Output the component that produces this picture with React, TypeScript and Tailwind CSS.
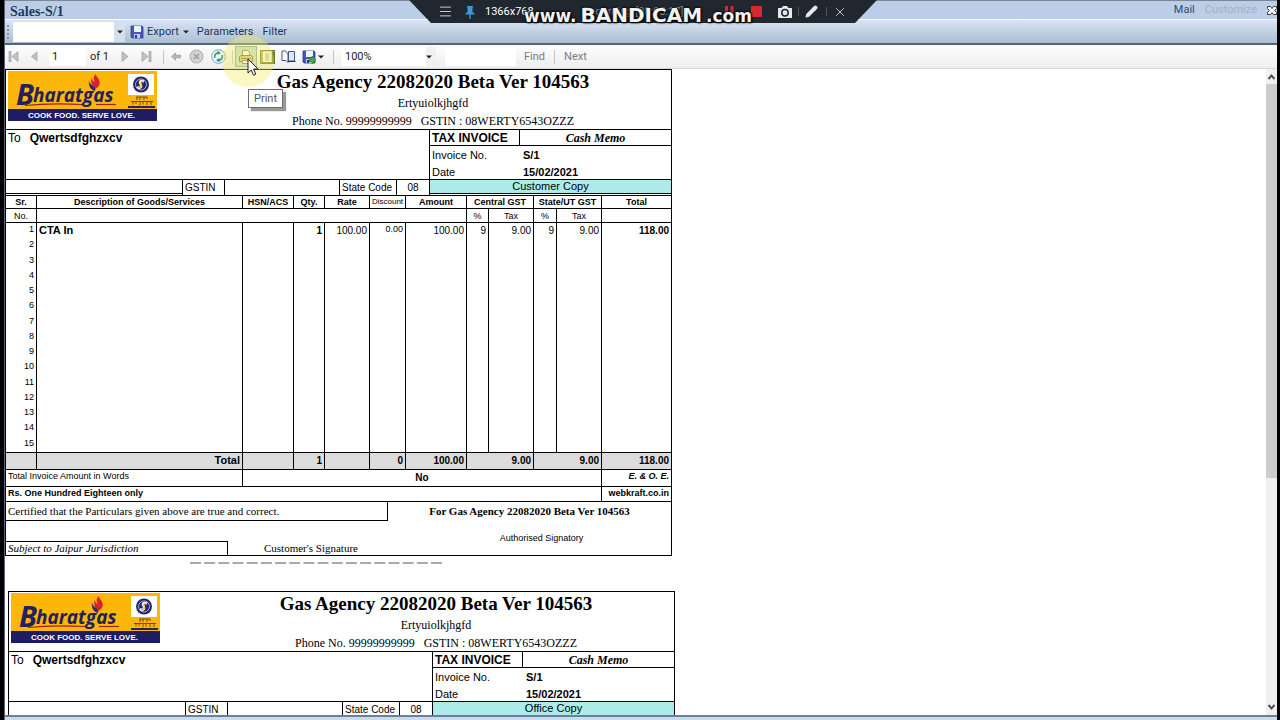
// App.tsx
import React from 'react';
import { Camera, Menu, Pencil, X } from 'lucide-react';

const AGENCY = 'Gas Agency 22082020 Beta Ver 104563';
const ROWS = Array.from({ length: 15 }, (_, i) => i + 1);
const item = { name: 'CTA In', qty: '1', rate: '100.00', discount: '0.00', amount: '100.00', pct: '9', tax: '9.00', total: '118.00' };

function Separator() {
  return <span className="h-[14px] w-px shrink-0 bg-[#c4c4c8]" />;
}

function Caret() {
  return (
    <svg width="6" height="4" viewBox="0 0 6 4" className="shrink-0" aria-hidden="true">
      <path d="M0 0.5h6L3 3.5z" fill="#222" />
    </svg>
  );
}

function FloppyIcon({ arrow = false }: { arrow?: boolean }) {
  return (
    <svg width="14" height="14" viewBox="0 0 14 14" className="shrink-0" aria-hidden="true">
      <path d="M1 1h11l1 1v11H2l-1-1z" fill="#4a55b8" stroke="#2f3a92" strokeWidth="0.8" />
      <rect x="4" y="1" width="7" height="6" fill="#f0f2ff" />
      <rect x="4" y="9" width="6" height="4" fill="#c8ccee" />
      <rect x="5" y="10" width="2" height="3" fill="#2a2f80" />
      {arrow && <path d="M7 8h3V6l4 4-4 4v-2.300H7z" fill="#3fae3a" stroke="#1f7a22" strokeWidth="0.6" />}
    </svg>
  );
}

function Logo() {
  return (
    <svg width="149" height="50" viewBox="0 0 149 50" role="img" aria-label="Bharatgas" className="shrink-0">
      <rect width="149" height="50" fill="#fdb60a" />
      <rect y="38" width="149" height="12" fill="#1e1c63" />
      <g fill="#23205f" fontFamily="Open Sans, sans-serif" fontWeight="bold" fontStyle="italic">
        <text x="8" y="34" fontSize="29">B</text>
        <text x="25" y="31" fontSize="19">haratgas</text>
      </g>
      <path d="M17 34.500C35 32.500 56 32.500 74 33.500" fill="none" stroke="#9c1f22" strokeWidth="1.200" />
      <path d="M88 33.500h20" stroke="#9c1f22" strokeWidth="1.200" />
      <path d="M87 18c4-2 6-5 4-9-1-3-3-3-3-6-3 3-3 5-1 8-3-1-3-3-3-5-2 5 0 9 3 12z" fill="#d8232a" />
      <path d="M81 9c0 3 2 4 4 6s3 3 2 5c-4-1-7-5-6-11z" fill="#2a2a78" />
      <rect x="120" y="3" width="26" height="21" fill="#fff" />
      <circle cx="133" cy="13.500" r="8" fill="#24266c" />
      <circle cx="133" cy="13.500" r="5.500" fill="none" stroke="#b9c0de" strokeWidth="0.9" />
      <path d="M136 10.500c-3-1.500-5 0-3.500 2.500s0 5-3.500 3" fill="none" stroke="#fff" strokeWidth="2.400" />
      <path d="M136 11c-3-1-4 0-3 2.200s0 4-3 3" fill="none" stroke="#fdb60a" strokeWidth="1.200" />
      <path d="M128 26h11M129 26v3M132 26v3M136 26v3M139 26v2M123 30.500h22M125 30v3.500M128 30v3M131 31c2 0 2 3 0 3M135 30v3.500M139 31v3M143 30v4" fill="none" stroke="#5b3d20" strokeWidth="0.9" />
      <rect x="120" y="35" width="27" height="2" fill="#24266c" />
      <text x="20" y="47" fontSize="8" fontWeight="bold" fill="#fff" fontFamily="Liberation Sans, sans-serif">COOK FOOD. SERVE LOVE.</text>
    </svg>
  );
}

function ItemTable() {
  return (
    <table className="h-[306px] w-full table-fixed border-separate border-spacing-0 text-[10px] leading-[13px] [&_td]:p-0 [&_td]:px-[2px] [&_th]:p-0 [&_td]:border-black [&_th]:border-black">
      <colgroup>
        <col className="w-[30px]" />
        <col className="w-[206px]" />
        <col className="w-[51px]" />
        <col className="w-[31px]" />
        <col className="w-[45px]" />
        <col className="w-[36px]" />
        <col className="w-[61px]" />
        <col className="w-[22px]" />
        <col className="w-[45px]" />
        <col className="w-[23px]" />
        <col className="w-[45px]" />
        <col className="w-[70px]" />
      </colgroup>
      <thead className="text-[9px] leading-[12px]">
        <tr className="h-[13px] [&>th]:border-t [&>th+th]:border-l">
          <th>Sr.</th>
          <th>Description of Goods/Services</th>
          <th>HSN/ACS</th>
          <th>Qty.</th>
          <th>Rate</th>
          <th className="align-top text-[8px] leading-[11px] font-normal">Discount</th>
          <th>Amount</th>
          <th colSpan={2}>Central GST</th>
          <th colSpan={2}>State/UT GST</th>
          <th>Total</th>
        </tr>
        <tr className="h-[14px] [&>th]:border-t [&>th]:font-normal [&>th+th]:border-l">
          <th>No.</th>
          <th colSpan={6} />
          <th>%</th>
          <th>Tax</th>
          <th>%</th>
          <th>Tax</th>
          <th />
        </tr>
      </thead>
      <tbody className="text-right">
        {ROWS.map((n) => (
          <tr key={n} className={n === 1 ? '[&>td]:border-t [&>td+td]:border-l' : '[&>td+td]:border-l'}>
            <td className="align-top text-[9px]">{n}</td>
            <td className="text-left text-[11px] font-bold">{n === 1 && item.name}</td>
            <td />
            <td className="font-bold">{n === 1 && item.qty}</td>
            <td>{n === 1 && item.rate}</td>
            <td className="align-top text-[9px]">{n === 1 && item.discount}</td>
            <td>{n === 1 && item.amount}</td>
            <td>{n === 1 && item.pct}</td>
            <td>{n === 1 && item.tax}</td>
            <td>{n === 1 && item.pct}</td>
            <td>{n === 1 && item.tax}</td>
            <td className="font-bold">{n === 1 && item.total}</td>
          </tr>
        ))}
      </tbody>
      <tfoot className="[&_td]:align-top">
        <tr className="h-[17px] bg-[#dcdcdc] text-right leading-[15px] font-bold [&>td]:border-t [&>td+td]:border-l">
          <td />
          <td className="text-[11px]">Total</td>
          <td />
          <td>1</td>
          <td />
          <td>0</td>
          <td>100.00</td>
          <td colSpan={2}>9.00</td>
          <td colSpan={2}>9.00</td>
          <td>118.00</td>
        </tr>
        <tr className="h-[17px] text-[9px] leading-[13px] [&>td]:border-t [&>td+td]:border-l">
          <td colSpan={2}>Total Invoice Amount in Words</td>
          <td colSpan={9} className="text-center text-[10px] leading-[15px] font-bold">No</td>
          <td className="text-right font-bold italic">E. &amp; O. E.</td>
        </tr>
        <tr className="h-[15px] text-[9px] leading-[13px] font-bold [&>td]:border-t [&>td+td]:border-l">
          <td colSpan={11}>Rs. One Hundred Eighteen only</td>
          <td className="text-right">webkraft.co.in</td>
        </tr>
      </tfoot>
    </table>
  );
}

function Invoice({ copy }: { copy: string }) {
  return (
    <section className="w-[667px] shrink-0 border border-black bg-white font-['Liberation_Sans',Arial,sans-serif] text-black">
      <header className="flex h-[59px] pt-px pl-[2px]">
        <Logo />
        <div className="flex flex-1 flex-col items-center pl-[38px] font-['Liberation_Serif','Times_New_Roman',serif] text-[12px] leading-[18px]">
          <h2 className="pb-px text-[19px] leading-[22px] font-bold">{AGENCY}</h2>
          <p>Ertyuiolkjhgfd</p>
          <p className="whitespace-pre">Phone No. 99999999999   GSTIN : 08WERTY6543OZZZ</p>
        </div>
      </header>

      <div className="flex h-[66px] border-t border-black">
        <div className="flex w-[423px] flex-col justify-between">
          <p className="flex gap-[9px] px-[2px] pt-px text-[12px] leading-[15px]">
            <span>To</span>
            <b>Qwertsdfghzxcv</b>
          </p>
          <div className="flex h-[16px] border-t border-black text-[10px] leading-[16px]">
            <span className="mb-px w-[176px] border-b border-black" />
            <span className="w-[42px] border-l border-black pl-[2px]">GSTIN</span>
            <span className="w-[115px] border-l border-black" />
            <span className="w-[57px] border-l border-black pl-[2px]">State Code</span>
            <span className="flex-1 border-l border-black text-center">08</span>
          </div>
        </div>
        <div className="flex flex-1 flex-col border-l border-black">
          <div className="flex h-[16px] shrink-0 border-b border-black text-[12px] leading-[16px] font-bold">
            <span className="w-[89px] pl-[2px]">TAX INVOICE</span>
            <span className="flex-1 border-l border-black text-center font-['Liberation_Serif','Times_New_Roman',serif] italic">Cash Memo</span>
          </div>
          <dl className="grid min-h-0 flex-1 grid-cols-[91px_1fr] pt-px pl-[2px] text-[11px] leading-[17px]">
            <dt>Invoice No.</dt>
            <dd className="font-bold">S/1</dd>
            <dt>Date</dt>
            <dd className="font-bold">15/02/2021</dd>
          </dl>
          <p className="mb-px h-[15px] shrink-0 border-y border-black bg-[#adebeb] text-center text-[11px] leading-[13px]">{copy}</p>
        </div>
      </div>

      <ItemTable />

      <footer className="flex h-[54px] border-t border-black font-['Liberation_Serif','Times_New_Roman',serif] text-[11px]">
        <div className="flex w-[382px] flex-col justify-between">
          <p className="h-[19px] border-r border-b border-black pl-[2px] leading-[18px]">Certified that the Particulars given above are true and correct.</p>
          <div className="flex h-[14px] leading-[13px]">
            <span className="w-[222px] border-t border-r border-black pl-[2px] italic">Subject to Jaipur Jurisdiction</span>
            <span className="pt-px pl-9">Customer's Signature</span>
          </div>
        </div>
        <div className="flex flex-1 flex-col items-center gap-[11px]">
          <b className="leading-[18px]">For {AGENCY}</b>
          <span className="pl-6 font-['Liberation_Sans',Arial,sans-serif] text-[9px] leading-[14px]">Authorised Signatory</span>
        </div>
      </footer>
    </section>
  );
}

function RecorderBar() {
  return (
    <div className="absolute top-0 left-[405px] h-[23px] w-[468px] bg-[#20272e] text-white [clip-path:polygon(0_0,100%_0,446px_100%,22px_100%)]">
      <div className="flex h-full items-center pl-[29px]">
        <button aria-label="Menu"><Menu size={15} strokeWidth={1.500} className="text-[#d5d8da]" /></button>
        <button aria-label="Pin" className="ml-[11px]">
          <svg width="12" height="14" viewBox="0 0 12 14" aria-hidden="true">
            <path d="M3 1h6v1.500H8.500V7L10.500 8.500V9.500H6.700V14H5.300V9.500H1.500V8.500L3.500 7V2.500H3z" fill="#3f97dc" />
          </svg>
        </button>
        <span className="ml-[9px] w-[46px] font-['Roboto',sans-serif] text-[11px] leading-[14px]">1366x768</span>
        <span className="ml-[52px] w-[120px] font-['Roboto',sans-serif] text-[11px] leading-[14px] text-[#8a8f94]">Recording [00:05:17]</span>
        <button aria-label="Pause" className="ml-[22px]">
          <svg width="9" height="11" viewBox="0 0 9 11" aria-hidden="true">
            <path d="M0 0h3v11H0zM5.500 0h3v11h-3z" fill="#d42a2e" />
          </svg>
        </button>
        <button aria-label="Stop" className="ml-[17px] h-[11px] w-[11px] bg-[#d42a2e]" />
        <button aria-label="Capture" className="ml-[15px]">
          <svg width="16" height="14" viewBox="0 0 16 14" aria-hidden="true">
            <path d="M1 3h3.500L6 1h4l1.500 2H15v10H1z" fill="#e6e8ea" />
            <circle cx="8" cy="7.800" r="3.200" fill="none" stroke="#20272e" strokeWidth="1.500" />
          </svg>
        </button>
        <span className="ml-[5px] h-[9px] w-px bg-[#4a5158]" />
        <button aria-label="Draw" className="ml-[6px]"><Pencil size={13} strokeWidth={2} className="fill-[#e6e8ea] text-[#e6e8ea]" /></button>
        <span className="ml-[8px] h-[9px] w-px bg-[#4a5158]" />
        <button aria-label="Close recorder" className="ml-[6px]"><X size={14} strokeWidth={1.500} className="text-[#d5d8da]" /></button>
      </div>
    </div>
  );
}

function TitleBar() {
  return (
    <div className="flex h-[20px] shrink-0 items-center border-t border-b border-t-[#7d8794] border-b-white bg-[#bccde8] pl-[5px] font-['Roboto',sans-serif] text-[11px] text-[#34496b]">
      <h1 className="flex-1 pt-[3px] font-['Liberation_Serif',serif] text-[14px] leading-[15px] font-bold text-[#1f3a60]">Sales-S/1</h1>
      <button className="leading-[16px]">Mail</button>
      <button className="ml-[10px] leading-[16px] text-[#a3b1c4]" disabled>Customize</button>
      <button aria-label="Close" className="ml-[10px]">
        <svg width="10" height="9" viewBox="0 0 10 9" aria-hidden="true">
          <path d="M0.500 0.500h3L5 2.500 6.500 0.500h3v2L7.500 4.500l2 2v2h-3L5 6.500 3.500 8.500h-3v-2l2-2-2-2z" fill="#fff" stroke="#333b48" />
        </svg>
      </button>
    </div>
  );
}

function ActionBar() {
  return (
    <div className="flex h-[25px] shrink-0 items-center border-b-2 border-[#50647a] bg-linear-to-b from-[#dae4f1] to-[#aabfd2] pl-[2px] font-['Roboto',sans-serif] text-[11px] leading-[16px] text-[#1f3557]">
      <span className="h-[14px] w-[3px] border-l-2 border-dotted border-[#7f93ac]" />
      <div className="relative ml-[3px] flex h-[20px] w-[112px] items-center justify-end bg-linear-to-r from-white from-90% to-[#d3e0ee] to-90% pr-[2px]">
        <select aria-label="Template" className="absolute inset-0 appearance-none opacity-0" />
        <Caret />
      </div>
      <button className="ml-[5px] flex items-center gap-[3px]">
        <FloppyIcon />
        Export
      </button>
      <span className="ml-[4px] flex"><Caret /></span>
      <button className="ml-[8px]">Parameters</button>
      <button className="ml-[9px]">Filter</button>
    </div>
  );
}

function ReportBar() {
  return (
    <div className="flex h-[24px] shrink-0 items-center border-b border-[#d8d8d8] bg-linear-to-b from-[#fdfdfd] to-[#eeeeee] pl-[3px] font-['Roboto',sans-serif] text-[11px] leading-[16px] text-[#222]">
      <button aria-label="First page">
        <svg width="11" height="11" viewBox="0 0 11 11" aria-hidden="true"><path d="M1 0h2v11H1zM10 0.500v10L4 5.500z" fill="#c0c0c4" stroke="#98989c" strokeWidth="0.6" /></svg>
      </button>
      <button aria-label="Previous page" className="ml-[11px]">
        <svg width="8" height="11" viewBox="0 0 8 11" aria-hidden="true"><path d="M7 1v9L1.500 5.500z" fill="#c0c0c4" stroke="#98989c" strokeWidth="0.6" /></svg>
      </button>
      <input aria-label="Page" defaultValue="1" className="ml-[11px] h-[19px] w-[37px] bg-white pl-[3px]" />
      <span className="ml-[4px] w-[23px] whitespace-nowrap">of 1</span>
      <button aria-label="Next page" className="ml-[8px]">
        <svg width="8" height="11" viewBox="0 0 8 11" aria-hidden="true"><path d="M1 0.500v10l6-5z" fill="#c0c0c4" stroke="#98989c" strokeWidth="0.6" /></svg>
      </button>
      <button aria-label="Last page" className="mr-[11px] ml-[12px]">
        <svg width="11" height="11" viewBox="0 0 11 11" aria-hidden="true"><path d="M8 0h2v11H8zM1 0.500v10l6-5z" fill="#c0c0c4" stroke="#98989c" strokeWidth="0.6" /></svg>
      </button>
      <Separator />
      <button aria-label="Back" className="ml-[7px]">
        <svg width="10" height="9" viewBox="0 0 10 9" aria-hidden="true"><path d="M0.500 4.500L4.500 1v2.200h5v2.600h-5V8z" fill="#b9b9bc" stroke="#909094" strokeWidth="0.7" /></svg>
      </button>
      <button aria-label="Stop rendering" className="ml-[8px]">
        <svg width="15" height="15" viewBox="0 0 15 15" aria-hidden="true">
          <circle cx="7.500" cy="7.500" r="6.500" fill="#d2d2d4" stroke="#acacb0" />
          <path d="M5 5l5 5M10 5l-5 5" stroke="#98989c" strokeWidth="1.300" />
        </svg>
      </button>
      <button aria-label="Refresh" className="mr-[6px] ml-[7px]">
        <svg width="15" height="15" viewBox="0 0 15 15" aria-hidden="true">
          <circle cx="7.500" cy="7.500" r="6.800" fill="#eef6fc" stroke="#6fa6d6" />
          <path d="M3.800 9A4 4 0 0 1 7 3.800" fill="none" stroke="#35a344" strokeWidth="1.600" />
          <path d="M6.500 1.800L10 4 6.500 6z" fill="#35a344" />
          <path d="M11.200 6A4 4 0 0 1 8 11.200" fill="none" stroke="#2f86a8" strokeWidth="1.600" />
          <path d="M8.500 9L5 11.200 8.500 13.200z" fill="#2f86a8" />
        </svg>
      </button>
      <Separator />
      <button aria-label="Print" className="ml-[2px] flex h-[21px] w-[22px] items-center justify-center border border-[#7fa99a] bg-[#c4dccb]">
        <svg width="16" height="16" viewBox="0 0 16 16" aria-hidden="true">
          <path d="M4.500 7V1.500h5l2 2V7" fill="#fff" stroke="#8c8140" />
          <path d="M1.500 7.500l1.500-1h10l1.500 1v5h-13z" fill="#d6c988" stroke="#7d7134" />
          <path d="M3 9.500h10" stroke="#7d7134" />
          <path d="M4.500 11.500h7v3h-7z" fill="#fff" stroke="#8c8140" />
        </svg>
      </button>
      <button aria-label="Print layout" className="ml-[3px]">
        <svg width="15" height="14" viewBox="0 0 15 14" aria-hidden="true">
          <rect x="0.500" y="0.500" width="14" height="13" fill="#a3b256" stroke="#66782c" />
          <path d="M13 2v11.500M2 13h12" stroke="#5a6c24" strokeWidth="1.500" />
          <rect x="3" y="1.500" width="8.500" height="10.500" fill="#fffef0" />
          <path d="M5 4h4.500M5 6h4.500M5 8h4.500M5 10h4.500" stroke="#7c8c50" strokeWidth="0.8" />
        </svg>
      </button>
      <button aria-label="Page setup" className="ml-[6px]">
        <svg width="15" height="13" viewBox="0 0 15 13" aria-hidden="true">
          <path d="M1 1h3.500L7 4v8.500L5 10.500H1z" fill="#f8faff" stroke="#4a5878" />
          <path d="M7.500 1.500h6v9.500h-6z" fill="#dfe6f4" stroke="#4a5878" />
          <path d="M7 11.500h7.500" stroke="#27345a" />
        </svg>
      </button>
      <button aria-label="Export" className="mr-[9px] ml-[6px] flex items-center gap-[2px]">
        <FloppyIcon arrow />
        <Caret />
      </button>
      <Separator />
      <div className="relative ml-[7px] flex h-[19px] w-[95px] items-center bg-linear-to-r from-white from-90% to-[#f1f1f1] to-90% pr-[4px]">
        <select aria-label="Zoom" className="h-full w-full appearance-none bg-transparent pl-[4px] outline-none">
          <option>100%</option>
        </select>
        <Caret />
      </div>
      <input aria-label="Find text" className="ml-[9px] h-[19px] w-[71px] bg-white" />
      <button className="mr-[9px] ml-[8px] text-[#7b7b7f]">Find</button>
      <Separator />
      <button className="ml-[9px] text-[#7b7b7f]">Next</button>
    </div>
  );
}

function ScrollBar() {
  return (
    <div className="flex w-[11px] shrink-0 flex-col items-center bg-[#f0f0f0]">
      <svg width="9" height="15" viewBox="0 0 9 15" className="shrink-0" aria-hidden="true"><path d="M1.500 10l3-3.500 3 3.500" fill="none" stroke="#505050" strokeWidth="2" /></svg>
      <div className="w-full flex-[394] bg-[#cdcdcd]" />
      <div className="flex-[222]" />
      <svg width="9" height="15" viewBox="0 0 9 15" className="shrink-0" aria-hidden="true"><path d="M1.500 5l3 3.500L7.500 5" fill="none" stroke="#505050" strokeWidth="2" /></svg>
    </div>
  );
}

export default function App() {
  return (
    <div className="relative flex h-screen flex-col overflow-hidden border-r-[3px] border-l-[4px] border-black bg-white">
      <div className="flex min-h-0 flex-1 flex-col border-l border-[#5a6478]">
        <TitleBar />
        <ActionBar />
        <ReportBar />
        <main className="flex min-h-0 flex-1 border-b-2 border-[#6c7f96]">
          <div className="flex flex-1 flex-col overflow-hidden">
            <Invoice copy="Customer Copy" />
            <svg width="252" height="2" className="mt-[6px] mb-[27px] ml-[185px] shrink-0" aria-hidden="true">
              <path d="M0 1h252" stroke="#8f8f8f" strokeWidth="1.500" strokeDasharray="11 3.176" />
            </svg>
            <div className="pl-[3px]">
              <Invoice copy="Office Copy" />
            </div>
          </div>
          <ScrollBar />
        </main>
        <div className="h-[3px] shrink-0 bg-[#c9dbee]" />
      </div>

      <RecorderBar />
      <p className="absolute top-[4px] left-[520px] flex items-baseline gap-[4px] font-['DejaVu_Sans',sans-serif] text-[17px] leading-[22px] font-bold text-[#f2f2f2] [text-shadow:0_0_2px_#000,0_0_3px_#000,1px_1px_2px_#000]">
        www.<span className="text-[20px]">BANDICAM</span>.com
      </p>

      {/* click highlight, pointer and tooltip over the print button */}
      <div className="absolute top-[35px] left-[218px] h-[52px] w-[52px] rounded-full bg-[#f5ee6a]/40" />
      <svg width="12" height="19" viewBox="0 0 12 19" className="absolute top-[58px] left-[243px]" aria-hidden="true">
        <path d="M1 1v14l3.300-3 2.200 5.200 2.300-1L6.600 11H11z" fill="#fff" stroke="#222" />
      </svg>
      <div role="tooltip" className="absolute top-[89px] left-[244px] border border-[#6e6e6e] bg-white px-[5px] font-['Roboto',sans-serif] text-[11px] leading-[17px] text-[#555] shadow-[3px_3px_1px_#00000066]">
        Print
      </div>
    </div>
  );
}
